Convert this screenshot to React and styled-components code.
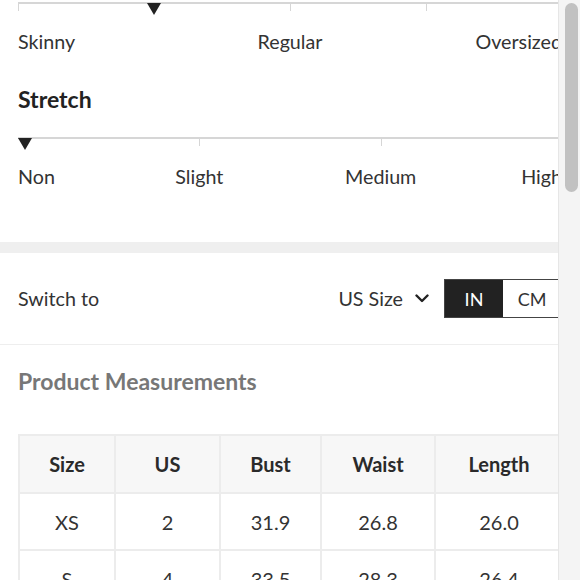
import React from "react";
import styled, { createGlobalStyle } from "styled-components";

const Global = createGlobalStyle`
  html, body {
    margin: 0;
    padding: 0;
    background: #fff;
  }
  * {
    box-sizing: border-box;
  }
`;

const Page = styled.div`
  display: flex;
  width: 580px;
  height: 580px;
  overflow: hidden;
  background: #fff;
  font-family: Lato, "Noto Sans", sans-serif;
  color: #333;
`;

const Viewport = styled.div`
  flex: 1;
  min-width: 0;
  overflow: hidden;
`;

const ScrollTrack = styled.div`
  width: 22px;
  flex-shrink: 0;
  background: #f4f4f4;
  border-left: 1px solid #e6e6e6;
`;

const ScrollThumb = styled.div`
  width: 13px;
  height: 189px;
  margin: 3px 0 0 6px;
  border-radius: 7px;
  background: #c1c1c1;
`;

const Content = styled.div`
  width: 580px;
`;

const Section = styled.div`
  padding: 2px 18px 0;
`;

const Heading = styled.h3`
  margin: ${(p) => p.$top || 0}px 0 0;
  font-size: 23px;
  line-height: 28px;
  font-weight: 700;
  color: ${(p) => p.$color || "#222"};
`;

const Slider = styled.div`
  margin-top: ${(p) => p.$top || 0}px;
`;

const Track = styled.div`
  position: relative;
  height: 2px;
  background: #d6d6d6;
`;

const Tick = styled.span`
  position: absolute;
  top: 0;
  width: 1px;
  height: 9px;
  background: #d6d6d6;
`;

const Marker = styled.span`
  position: absolute;
  top: 1px;
  width: 0;
  height: 0;
  border-left: 7px solid transparent;
  border-right: 7px solid transparent;
  border-top: 12px solid #222;
`;

const Labels = styled.div`
  position: relative;
  height: 24px;
  margin-top: 26px;
`;

const Label = styled.span`
  position: absolute;
  top: 0;
  font-size: 19.7px;
  line-height: 24px;
  white-space: nowrap;
  color: #333;
`;

const Band = styled.div`
  height: 11px;
  margin-top: 53px;
  background: #efefef;
`;

const SwitchRow = styled.div`
  display: flex;
  align-items: center;
  justify-content: space-between;
  height: 92px;
  padding: 0 18px;
  border-bottom: 1px solid #eeeeee;
  font-size: 19.7px;
`;

const Controls = styled.div`
  display: flex;
  align-items: center;
`;

const SizeSelect = styled.div`
  display: flex;
  align-items: center;
  gap: 12px;
  margin-right: 15px;
  color: #333;
`;

const Toggle = styled.div`
  display: flex;
  border: 1px solid #444;
`;

const ToggleBtn = styled.div`
  width: 58px;
  height: 37px;
  display: flex;
  align-items: center;
  justify-content: center;
  font-size: 18px;
  background: ${(p) => (p.$active ? "#222" : "#fff")};
  color: ${(p) => (p.$active ? "#fff" : "#333")};
`;

const Measure = styled.div`
  padding: 22px 18px 0;
`;

const Table = styled.table`
  width: 544px;
  margin-top: 39px;
  border-collapse: collapse;
  table-layout: fixed;
  font-size: 20px;
  color: #333;

  th,
  td {
    border: 2px solid #ececec;
    text-align: center;
    padding: 0;
  }
  th {
    height: 58px;
    background: #f7f7f7;
    font-weight: 700;
    color: #2a2a2a;
  }
  td {
    height: 57px;
  }
`;

const Chevron = () => (
  <svg width="14" height="9" viewBox="0 0 14 9" fill="none">
    <path d="M1.5 1.5 L7 7 L12.5 1.5" stroke="#222" strokeWidth="2.4" strokeLinecap="round" strokeLinejoin="round" />
  </svg>
);

const RangeSlider = ({ top, ticks, marker, labels }) => (
  <Slider $top={top}>
    <Track>
      {ticks.map((t) => (
        <Tick key={t} style={{ left: `${t * 100}%` }} />
      ))}
      <Marker
        style={{
          left: `${marker * 100}%`,
          transform: marker === 0 ? "none" : "translateX(-50%)",
        }}
      />
    </Track>
    <Labels>
      {labels.map((l, i) => {
        const pos = i / (labels.length - 1);
        const shift = i === 0 ? 0 : i === labels.length - 1 ? -100 : -50;
        return (
          <Label key={l} style={{ left: `${pos * 100}%`, transform: `translateX(${shift}%)` }}>
            {l}
          </Label>
        );
      })}
    </Labels>
  </Slider>
);

const columns = ["Size", "US", "Bust", "Waist", "Length"];
const widths = [96, 105, 101, 114, 128];
const rows = [
  ["XS", "2", "31.9", "26.8", "26.0"],
  ["S", "4", "33.5", "28.3", "26.4"],
  ["M", "6", "35.0", "29.9", "26.8"],
];

export default function App() {
  return (
    <>
      <Global />
      <Page>
        <Viewport>
          <Content>
            <Section>
              <RangeSlider
                ticks={[0, 0.5, 0.75, 1]}
                marker={0.25}
                labels={["Skinny", "Regular", "Oversized"]}
              />
              <Heading $top={31}>Stretch</Heading>
              <RangeSlider
                top={24}
                ticks={[1 / 3, 2 / 3, 1]}
                marker={0}
                labels={["Non", "Slight", "Medium", "High"]}
              />
            </Section>
            <Band />
            <SwitchRow>
              <span>Switch to</span>
              <Controls>
                <SizeSelect>
                  US Size <Chevron />
                </SizeSelect>
                <Toggle>
                  <ToggleBtn $active>IN</ToggleBtn>
                  <ToggleBtn>CM</ToggleBtn>
                </Toggle>
              </Controls>
            </SwitchRow>
            <Measure>
              <Heading $color="#777">Product Measurements</Heading>
              <Table>
                <colgroup>
                  {widths.map((w, i) => (
                    <col key={i} style={{ width: w }} />
                  ))}
                </colgroup>
                <thead>
                  <tr>
                    {columns.map((c) => (
                      <th key={c}>{c}</th>
                    ))}
                  </tr>
                </thead>
                <tbody>
                  {rows.map((r) => (
                    <tr key={r[0]}>
                      {r.map((v, i) => (
                        <td key={i}>{v}</td>
                      ))}
                    </tr>
                  ))}
                </tbody>
              </Table>
            </Measure>
          </Content>
        </Viewport>
        <ScrollTrack>
          <ScrollThumb />
        </ScrollTrack>
      </Page>
    </>
  );
}
